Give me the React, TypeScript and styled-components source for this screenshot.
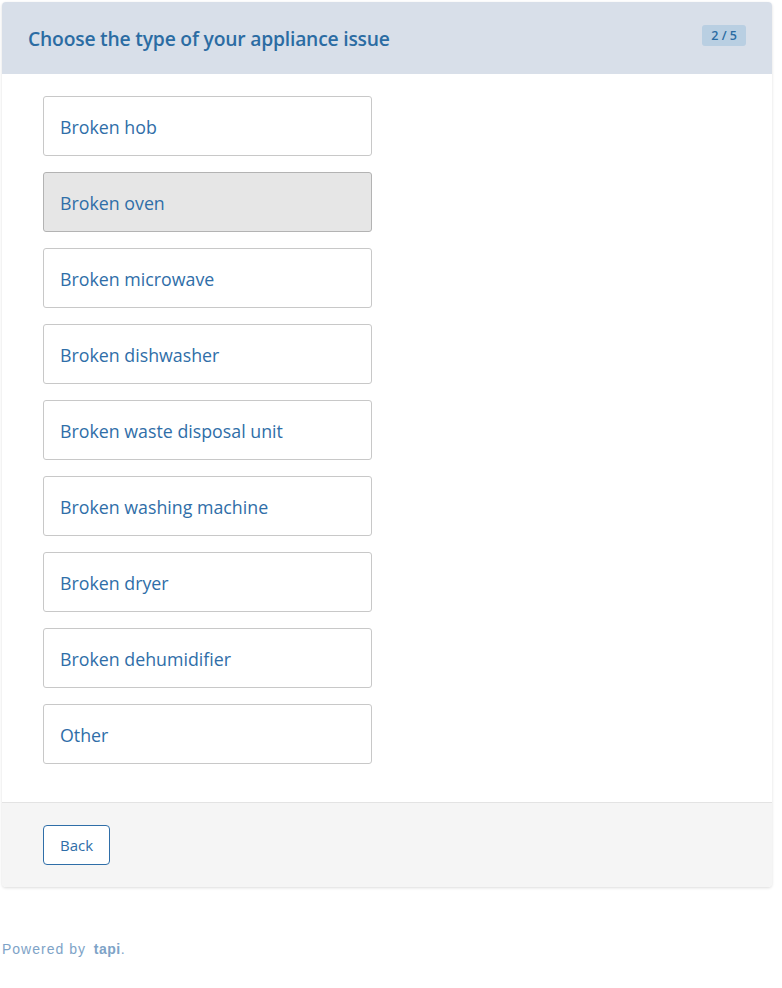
import React, { useState } from "react";
import styled, { createGlobalStyle } from "styled-components";

const GlobalStyle = createGlobalStyle`
  html, body {
    margin: 0;
    padding: 0;
    background: #ffffff;
  }
  body {
    font-family: "Open Sans", "Noto Sans", sans-serif;
  }
`;

const options = [
  "Broken hob",
  "Broken oven",
  "Broken microwave",
  "Broken dishwasher",
  "Broken waste disposal unit",
  "Broken washing machine",
  "Broken dryer",
  "Broken dehumidifier",
  "Other",
];

const Page = styled.div`
  padding: 2px 10px 0 2px;
`;

const Card = styled.div`
  width: 770px;
  background: #ffffff;
  border-radius: 4px;
  box-shadow: 0 1px 3px rgba(0, 0, 0, 0.14);
  overflow: hidden;
`;

const Header = styled.div`
  height: 72px;
  background: #d8dfe9;
  display: flex;
  align-items: flex-start;
  justify-content: space-between;
  padding: 0 26px 0 26px;
  box-sizing: border-box;
`;

const Title = styled.h1`
  margin: 0;
  padding-top: 23px;
  font-size: 19.3px;
  font-weight: 600;
  color: #2b6ca3;
  letter-spacing: -0.2px;
`;

const Badge = styled.span`
  margin-top: 23px;
  padding: 2px 9px;
  border-radius: 3px;
  background: #b9cfe2;
  color: #2b6ca3;
  font-size: 12.5px;
  line-height: 17px;
  font-weight: 600;
`;

const Body = styled.div`
  padding: 22px 41px 38px;
  display: flex;
  flex-direction: column;
  gap: 16px;
  border-bottom: 1px solid #e3e3e3;
`;

const Option = styled.button<{ $active?: boolean }>`
  width: 329px;
  height: 60px;
  text-align: left;
  padding: 2px 16px 0;
  border: 1px solid ${(p) => (p.$active ? "#b3b3b3" : "#c8c8c8")};
  border-radius: 3px;
  background: ${(p) => (p.$active ? "#e6e6e6" : "#ffffff")};
  color: #2f6ea8;
  font-family: inherit;
  font-size: 17.8px;
  cursor: pointer;
`;

const Footer = styled.div`
  background: #f5f5f5;
  padding: 22px 41px 22px;
`;

const BackButton = styled.button`
  height: 40px;
  padding: 0 16px;
  border: 1px solid #2f6ea8;
  border-radius: 4px;
  background: #ffffff;
  color: #2f6ea8;
  font-family: inherit;
  font-size: 15px;
  cursor: pointer;
`;

const Powered = styled.div`
  margin-top: 54px;
  font-family: "Liberation Sans", Arial, sans-serif;
  font-size: 14px;
  letter-spacing: 1px;
  color: #7ea3c7;

  b {
    margin-left: 3px;
    font-weight: 700;
    letter-spacing: 0.5px;
  }
`;

export default function App() {
  const [active, setActive] = useState("Broken oven");
  return (
    <>
      <GlobalStyle />
      <Page>
        <Card>
          <Header>
            <Title>Choose the type of your appliance issue</Title>
            <Badge>2 / 5</Badge>
          </Header>
          <Body>
            {options.map((o) => (
              <Option key={o} $active={o === active} onClick={() => setActive(o)}>
                {o}
              </Option>
            ))}
          </Body>
          <Footer>
            <BackButton>Back</BackButton>
          </Footer>
        </Card>
        <Powered>
          Powered by <b>tapi</b>.
        </Powered>
      </Page>
    </>
  );
}
